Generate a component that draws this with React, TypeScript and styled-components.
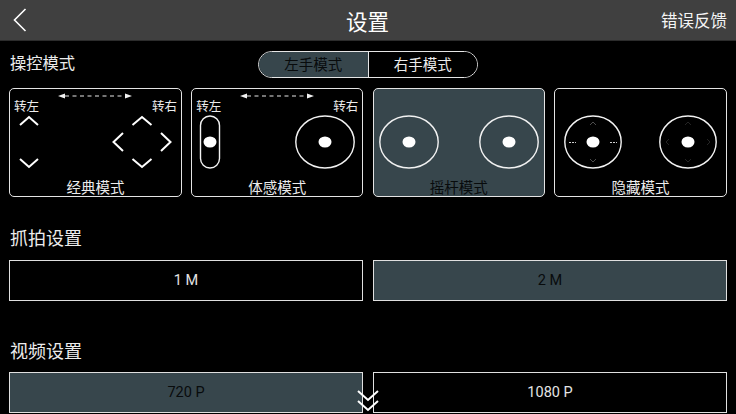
import React from 'react'
import styled, { createGlobalStyle } from 'styled-components'

const GlobalStyle = createGlobalStyle`
  html, body {
    margin: 0;
    padding: 0;
    background: #000;
  }
  * {
    box-sizing: border-box;
  }
`

const ACTIVE_BG = '#37464c'
const ACTIVE_TEXT = '#080b0c'

const Page = styled.div`
  position: relative;
  width: 736px;
  height: 414px;
  overflow: hidden;
  background: #000;
  color: #ececec;
  font-family: 'Noto Sans CJK SC', 'Liberation Sans', sans-serif;
`

const Header = styled.header`
  display: flex;
  align-items: center;
  justify-content: space-between;
  height: 41px;
  padding: 0 9px 0 13px;
  background: #404040;
  border-bottom: 1px solid #2c2c2c;
`

const BackButton = styled.div`
  display: flex;
  width: 100px;
`

const Title = styled.h1`
  margin: 0 0 0 -5px;
  font-size: 21.5px;
  font-weight: 400;
  line-height: 41px;
  color: #fff;
`

const Feedback = styled.div`
  width: 100px;
  font-size: 16.5px;
  line-height: 41px;
  text-align: right;
  white-space: nowrap;
  color: #f5f5f5;
`

const Content = styled.main`
  display: flex;
  flex-direction: column;
  padding: 0 9px;
`

const ModeBar = styled.div`
  position: relative;
  display: flex;
  justify-content: center;
  height: 47px;
  padding: 10px 0 0 0;
`

const ModeHeading = styled.h2`
  position: absolute;
  left: 1px;
  top: 9px;
  margin: 0;
  font-size: 16.3px;
  font-weight: 400;
  line-height: 24px;
`

const Segments = styled.div`
  display: flex;
  width: 220px;
  height: 27px;
  border: 1px solid #e6e6e6;
  border-radius: 14px;
  overflow: hidden;
`

const Segment = styled.div<{ $active?: boolean }>`
  flex: 1;
  display: flex;
  align-items: center;
  justify-content: center;
  font-size: 14.5px;
  line-height: 1;
  background: ${(p) => (p.$active ? ACTIVE_BG : '#000')};
  color: ${(p) => (p.$active ? ACTIVE_TEXT : '#ececec')};
  & + & {
    border-left: 1px solid #e6e6e6;
  }
`

const Cards = styled.div`
  display: grid;
  grid-template-columns: 173px 172px 172px 173px;
  justify-content: space-between;
  height: 109px;
`

const Card = styled.div<{ $active?: boolean }>`
  display: flex;
  flex-direction: column;
  align-items: stretch;
  border: 1px solid #e4e4e4;
  border-radius: 5px;
  background: ${(p) => (p.$active ? ACTIVE_BG : '#000')};
  color: ${(p) => (p.$active ? ACTIVE_TEXT : '#ececec')};
`

const CardTop = styled.div`
  display: flex;
  flex-direction: column;
  height: 26px;
  padding: 3px 4px 0;
`

const SwipeArrow = styled.svg`
  align-self: center;
  display: block;
  flex: none;
  margin-left: -1px;
`

const TurnLabels = styled.div`
  display: flex;
  justify-content: space-between;
  margin-top: -1px;
  font-size: 12.5px;
  line-height: 14px;
  color: #ececec;
`

const CardBody = styled.div<{ $pad: number }>`
  display: flex;
  align-items: center;
  justify-content: space-between;
  height: 54px;
  padding: 0 ${(p) => p.$pad}px;
`

const CardCaption = styled.div`
  margin-top: auto;
  height: 19px;
  font-size: 14.5px;
  line-height: 20px;
  text-align: center;
`

const Icon = styled.svg`
  display: block;
  flex: none;
`

const SectionHeading = styled.h2<{ $top: number }>`
  margin: ${(p) => p.$top}px 0 0 1px;
  font-size: 18px;
  font-weight: 400;
  line-height: 26px;
  height: 26px;
`

const Options = styled.div<{ $top: number }>`
  display: grid;
  grid-template-columns: 354px 354px;
  justify-content: space-between;
  margin-top: ${(p) => p.$top}px;
`

const Option = styled.div<{ $active?: boolean }>`
  display: flex;
  align-items: center;
  justify-content: center;
  height: 41px;
  border: 1px solid #e0e0e0;
  font-family: 'Roboto', 'Liberation Sans', sans-serif;
  font-size: 14.5px;
  background: ${(p) => (p.$active ? ACTIVE_BG : '#000')};
  color: ${(p) => (p.$active ? ACTIVE_TEXT : '#e4e4e4')};
`

const MoreIndicator = styled.svg`
  position: absolute;
  left: 357px;
  top: 389px;
`

const Swipe = () => (
  <SwipeArrow width="74" height="8" viewBox="0 0 74 8" fill="none">
    <path d="M7 4H67" stroke="#e8e8e8" strokeWidth="1" strokeDasharray="4 3.5" />
    <path d="M0 4L7 1.5V6.5Z M74 4L67 1.5V6.5Z" fill="#f2f2f2" />
  </SwipeArrow>
)

const chevron = { fill: 'none', stroke: '#fff', strokeWidth: 2 }

const UpDown = () => (
  <Icon width="20" height="54" viewBox="0 0 20 54">
    <path d="M1 10L10 2L19 10" {...chevron} />
    <path d="M1 44L10 52L19 44" {...chevron} />
  </Icon>
)

const DPad = () => (
  <Icon width="60" height="54" viewBox="0 0 60 54">
    <path d="M20.5 10L30 2L39.5 10" {...chevron} />
    <path d="M20.5 44L30 52L39.5 44" {...chevron} />
    <path d="M11 18L1.5 27L11 36" {...chevron} />
    <path d="M49 18L58.5 27L49 36" {...chevron} />
  </Icon>
)

const Slider = () => (
  <Icon width="22" height="54" viewBox="0 0 22 54">
    <rect x="1.5" y="1" width="19" height="52" rx="9.5" fill="none" stroke="#f2f2f2" strokeWidth="1.4" />
    <ellipse cx="11" cy="27" rx="6.5" ry="5.5" fill="#fff" />
  </Icon>
)

const Stick = ({ size = 60, hints }: { size?: number; hints?: 'bright' | 'dim' }) => {
  const cx = size / 2
  const hintColor = hints === 'bright' ? '#4c4c4c' : '#242424'
  return (
    <Icon width={size} height="54" viewBox={`0 0 ${size} 54`}>
      <ellipse cx={cx} cy="27" rx={cx - 0.8} ry="26" fill="none" stroke="#f2f2f2" strokeWidth="1.4" />
      {hints && (
        <g fill="none" stroke={hintColor} strokeWidth="1">
          <path d={`M${cx - 3} 10L${cx} 7L${cx + 3} 10`} />
          <path d={`M${cx - 3} 44L${cx} 47L${cx + 3} 44`} />
          {hints === 'dim' && <path d={`M${cx - 19} 24L${cx - 22} 27L${cx - 19} 30`} />}
          {hints === 'dim' && <path d={`M${cx + 19} 24L${cx + 22} 27L${cx + 19} 30`} />}
        </g>
      )}
      {hints === 'bright' && (
        <path
          d={`M${cx - 24} 27.5H${cx - 17} M${cx + 17} 27.5H${cx + 24}`}
          stroke="#cfcfcf"
          strokeWidth="1"
          strokeDasharray="2 1"
        />
      )}
      <ellipse cx={cx} cy="27" rx="6.5" ry="5.5" fill="#fff" />
    </Icon>
  )
}

const TurnHeader = () => (
  <CardTop>
    <Swipe />
    <TurnLabels>
      <span>转左</span>
      <span>转右</span>
    </TurnLabels>
  </CardTop>
)

const Spacer = styled.div`
  height: 26px;
`

export default function App() {
  return (
    <Page>
      <GlobalStyle />
      <Header>
        <BackButton>
          <Icon width="14" height="24" viewBox="0 0 14 24">
            <path d="M12.5 1L1.5 12L12.5 23" fill="none" stroke="#fff" strokeWidth="1.6" />
          </Icon>
        </BackButton>
        <Title>设置</Title>
        <Feedback>错误反馈</Feedback>
      </Header>
      <Content>
        <ModeBar>
          <ModeHeading>操控模式</ModeHeading>
          <Segments>
            <Segment $active>左手模式</Segment>
            <Segment>右手模式</Segment>
          </Segments>
        </ModeBar>
        <Cards>
          <Card>
            <TurnHeader />
            <CardBody $pad={9}>
              <UpDown />
              <DPad />
            </CardBody>
            <CardCaption>经典模式</CardCaption>
          </Card>
          <Card>
            <TurnHeader />
            <CardBody $pad={7}>
              <Slider />
              <Stick />
            </CardBody>
            <CardCaption>体感模式</CardCaption>
          </Card>
          <Card $active>
            <Spacer />
            <CardBody $pad={5}>
              <Stick />
              <Stick />
            </CardBody>
            <CardCaption>摇杆模式</CardCaption>
          </Card>
          <Card>
            <Spacer />
            <CardBody $pad={9}>
              <Stick size={58} hints="bright" />
              <Stick size={58} hints="dim" />
            </CardBody>
            <CardCaption>隐藏模式</CardCaption>
          </Card>
        </Cards>
        <SectionHeading $top={27}>抓拍设置</SectionHeading>
        <Options $top={10}>
          <Option>1 M</Option>
          <Option $active>2 M</Option>
        </Options>
        <SectionHeading $top={36}>视频设置</SectionHeading>
        <Options $top={9}>
          <Option $active>720 P</Option>
          <Option>1080 P</Option>
        </Options>
      </Content>
      <MoreIndicator width="22" height="24" viewBox="0 0 22 24" fill="none">
        <path d="M1 2L11 11L21 2" stroke="#fff" strokeWidth="2" />
        <path d="M1 12L11 21L21 12" stroke="#fff" strokeWidth="2" />
      </MoreIndicator>
    </Page>
  )
}
